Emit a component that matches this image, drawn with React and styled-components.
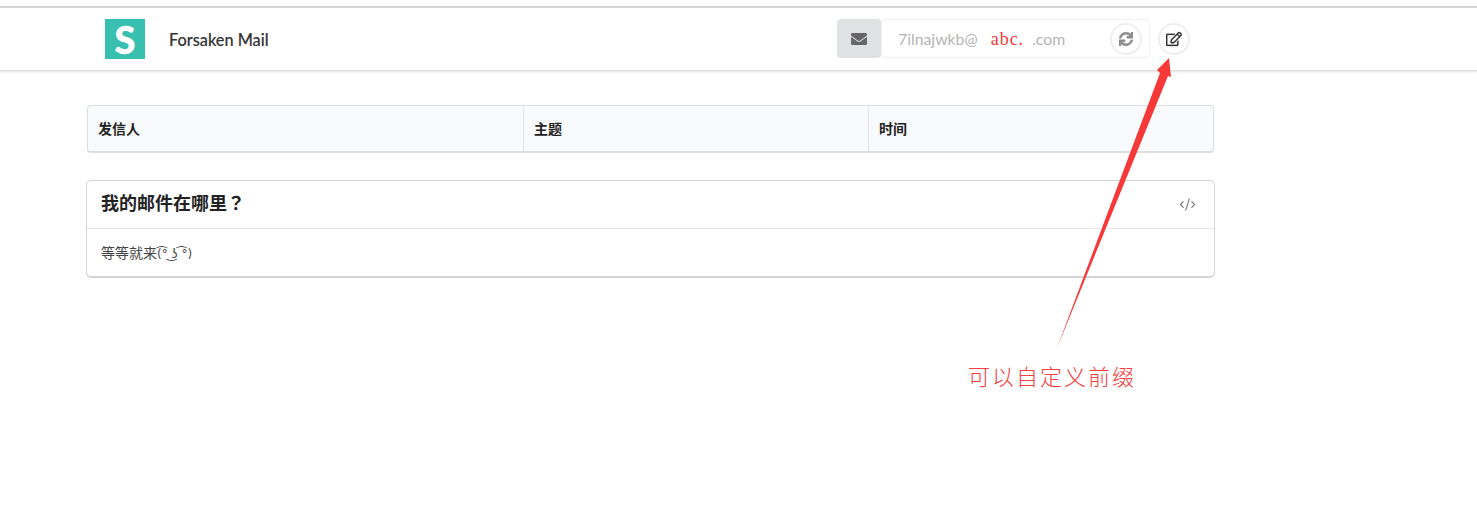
import React from "react";
import styled, { createGlobalStyle } from "styled-components";
import { FaEnvelope, FaSync, FaRegEdit } from "react-icons/fa";
import { CodeXml } from "lucide-react";

const fontStack = `Lato, "Noto Sans CJK SC", sans-serif`;

const GlobalStyle = createGlobalStyle`
  html, body {
    margin: 0;
    padding: 0;
    background: #fff;
    font-family: ${fontStack};
    color: #212121;
  }
  * {
    box-sizing: border-box;
  }
`;

const Page = styled.div`
  position: relative;
  width: 1477px;
  height: 513px;
  overflow: hidden;
  padding-top: 6px;
`;

const Header = styled.header`
  display: flex;
  align-items: center;
  height: 65px;
  padding: 0 287px 0 105px;
  border-top: 2px solid #d4d4d5;
  border-bottom: 1px solid #dededf;
  box-shadow: 0 1px 2px rgba(34, 36, 38, 0.12);
`;

const Logo = styled.div`
  display: flex;
  align-items: center;
  justify-content: center;
  width: 40px;
  height: 40px;
  background: #38bfb0;
  color: #fff;
  font-size: 38px;
  font-weight: 900;
  line-height: 1;
  -webkit-text-stroke: 0.5px #fff;
`;

const Brand = styled.span`
  margin-left: 24px;
  font-size: 16.3px;
  font-weight: 500;
  color: #333;
  -webkit-text-stroke: 0.15px #333;
`;

const Tools = styled.div`
  display: flex;
  align-items: center;
  margin-left: auto;
`;

const MailGroup = styled.div`
  display: flex;
  margin-bottom: 1px;
`;

const MailLabel = styled.div`
  display: flex;
  align-items: center;
  justify-content: center;
  width: 44px;
  height: 39px;
  background: #e0e1e2;
  border-radius: 4px;
  color: #666;
  font-size: 16px;
`;

const Field = styled.div`
  display: flex;
  align-items: center;
  width: 269px;
  height: 39px;
  padding: 0 7px 0 16px;
  border: 1px solid #f0f0f0;
  border-radius: 4px;
  font-size: 15.8px;
  color: #b4b4b4;
`;

const Domain = styled.span`
  margin: 0 8px 0 13px;
  padding-top: 2px;
  font-family: "Liberation Serif", serif;
  font-size: 18px;
  letter-spacing: 1px;
  color: #f33a3a;
`;

const CircleButton = styled.button`
  display: flex;
  align-items: center;
  justify-content: center;
  flex: none;
  width: 32px;
  height: 32px;
  padding: 0;
  margin-left: ${({ $push }) => ($push ? "auto" : "8px")};
  background: #fff;
  border: 2px solid #eeeeee;
  border-radius: 50%;
  color: ${({ $dark }) => ($dark ? "#333" : "#8c8c8c")};
  font-size: ${({ $dark }) => ($dark ? "16px" : "14px")};
  svg {
    stroke: currentColor;
    stroke-width: ${({ $dark }) => ($dark ? "8px" : "22px")};
  }
`;

const Main = styled.main`
  display: flex;
  flex-direction: column;
  gap: 27px;
  width: 1129px;
  margin: 34px 0 0 86px;
`;

const InboxTable = styled.div`
  display: grid;
  grid-template-columns: 435px 345px 1fr;
  height: 48px;
  margin: 0 1px;
  background: #f9fafb;
  border: 1px solid #dcdddd;
  border-bottom-width: 2px;
  border-radius: 4px;
`;

const HeadCell = styled.div`
  display: flex;
  align-items: center;
  padding: 0 0 2px 10px;
  font-size: 14px;
  font-weight: 700;
  color: #222;
  & + & {
    border-left: 1px solid #e2e3e4;
  }
`;

const Card = styled.section`
  height: 98px;
  border: 1px solid #d4d4d5;
  border-bottom-width: 2px;
  border-radius: 5px;
`;

const CardHead = styled.div`
  display: flex;
  align-items: center;
  justify-content: space-between;
  height: 48px;
  padding: 0 18px 6px 14px;
  border-bottom: 1px solid #e6e6e7;
`;

const CardTitle = styled.h2`
  margin: 0;
  font-size: 18px;
  font-weight: 700;
  color: #222;
`;

const Mark = styled.span`
  font-family: "Noto Sans CJK TC", sans-serif;
`;

const CodeIcon = styled(CodeXml)`
  margin-top: 6px;
  color: #777;
`;

const CardBody = styled.p`
  margin: 0;
  padding: 15px 14px 0;
  font-size: 14px;
  line-height: 18px;
  color: #444;
`;

const Face = styled.span`
  font-family: "DejaVu Sans", sans-serif;
  font-size: 12px;
`;

const ArrowLayer = styled.svg`
  position: absolute;
  top: 0;
  left: 0;
  pointer-events: none;
`;

const Note = styled.div`
  position: absolute;
  left: 968px;
  top: 362px;
  font-size: 22px;
  font-weight: 300;
  line-height: 30px;
  letter-spacing: 2px;
  color: #f44040;
`;

const columns = ["发信人", "主题", "时间"];

const App = () => {
  return (
    <Page>
      <GlobalStyle />
      <Header>
        <Logo>S</Logo>
        <Brand>Forsaken Mail</Brand>
        <Tools>
          <MailGroup>
            <MailLabel>
              <FaEnvelope />
            </MailLabel>
            <Field>
              <span>7ilnajwkb@</span>
              <Domain>abc.</Domain>
              <span>.com</span>
              <CircleButton $push>
                <FaSync />
              </CircleButton>
            </Field>
          </MailGroup>
          <CircleButton $dark>
            <FaRegEdit />
          </CircleButton>
        </Tools>
      </Header>
      <Main>
        <InboxTable>
          {columns.map((name) => (
            <HeadCell key={name}>{name}</HeadCell>
          ))}
        </InboxTable>
        <Card>
          <CardHead>
            <CardTitle>
              我的邮件在哪里<Mark>？</Mark>
            </CardTitle>
            <CodeIcon size={17} strokeWidth={1.5} />
          </CardHead>
          <CardBody>
            等等就来<Face>(͡° ͜ʖ ͡°)</Face>
          </CardBody>
        </Card>
      </Main>
      <ArrowLayer width="1477" height="513">
        <polygon
          points="1057,348 1160,73 1157,70 1169,58 1171,77 1168,76"
          fill="#f73838"
        />
      </ArrowLayer>
      <Note>可以自定义前缀</Note>
    </Page>
  );
};

export default App;
